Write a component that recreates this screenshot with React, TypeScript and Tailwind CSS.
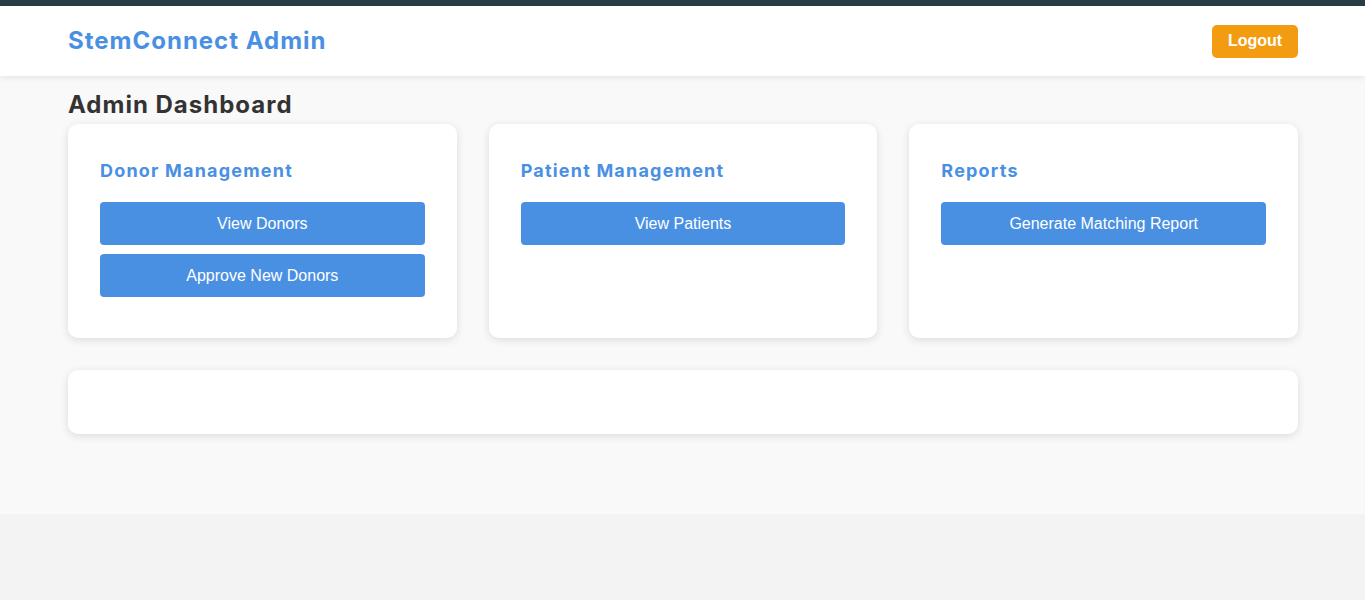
import React from "react";

const heading = { fontFamily: "Inter, 'Noto Sans', sans-serif" };

function Card({ title, actions }: { title: string; actions: string[] }) {
  return (
    <div className="bg-white rounded-[10px] shadow-[0_2px_8px_rgba(0,0,0,0.12)] px-8 pt-8 pb-8">
      <h3
        className="text-[18px] leading-[29px] font-bold tracking-[1.2px] text-[#4a90e2] mb-[17px]"
        style={heading}
      >
        {title}
      </h3>
      <div className="flex flex-col">
        {actions.map((a) => (
          <button
            key={a}
            className="h-[43px] mb-[9px] w-full rounded-[4px] bg-[#4a90e2] text-white text-[16px]"
            style={{ fontFamily: "'Liberation Sans', Arial, sans-serif" }}
          >
            {a}
          </button>
        ))}
      </div>
    </div>
  );
}

export default function App() {
  return (
    <div className="min-h-[600px] bg-[#f3f3f3]">
      <div className="h-[6px] bg-[#263e43]" />
      <header className="bg-white h-[70px] shadow-[0_2px_6px_rgba(0,0,0,0.08)] relative z-10">
        <div className="ml-[68px] w-[1230px] h-full flex items-center justify-between">
          <h1 className="text-[24px] font-bold tracking-[1px] text-[#4a90e2]" style={heading}>
            StemConnect Admin
          </h1>
          <button
            className="w-[86px] h-[33px] rounded-[5px] bg-[#f39c12] text-white font-bold text-[16px]"
            style={{ fontFamily: "'Liberation Sans', Arial, sans-serif" }}
          >
            Logout
          </button>
        </div>
      </header>
      <main className="bg-[#f9f9f9] h-[438px]">
        <div className="ml-[68px] w-[1230px]">
          <h2
            className="pt-[9px] text-[24px] leading-[39px] font-bold tracking-[1px] text-[#333]"
            style={heading}
          >
            Admin Dashboard
          </h2>
          <div className="grid grid-cols-3 gap-8">
            <Card title="Donor Management" actions={["View Donors", "Approve New Donors"]} />
            <Card title="Patient Management" actions={["View Patients"]} />
            <Card title="Reports" actions={["Generate Matching Report"]} />
          </div>
          <div className="mt-8 h-16 bg-white rounded-[10px] shadow-[0_2px_8px_rgba(0,0,0,0.12)]" />
        </div>
      </main>
    </div>
  );
}
